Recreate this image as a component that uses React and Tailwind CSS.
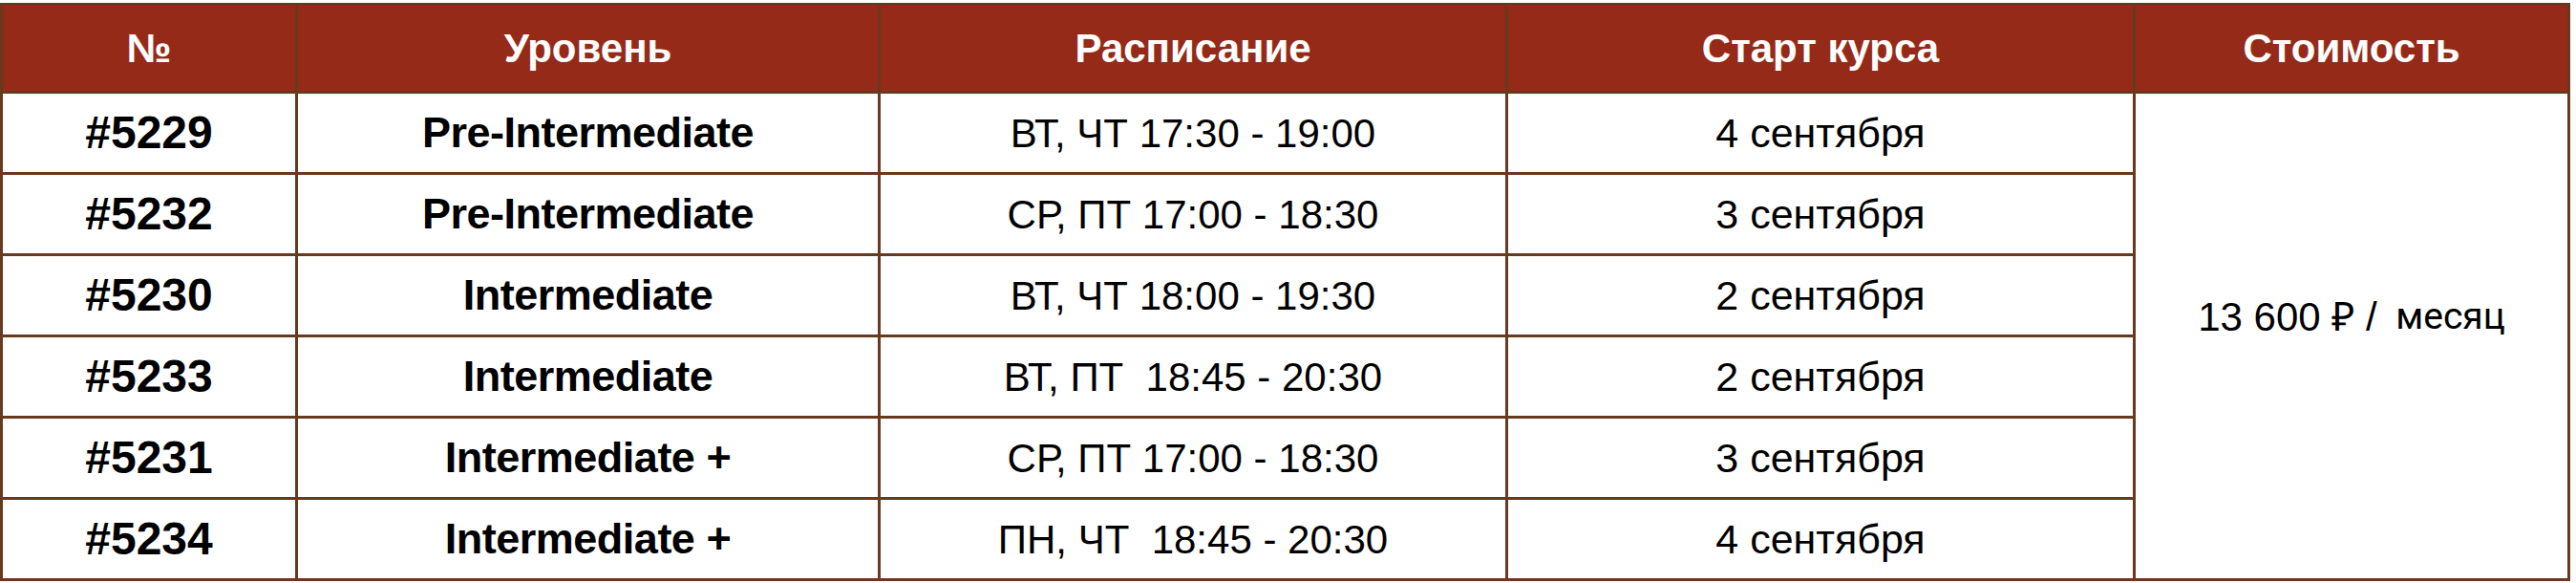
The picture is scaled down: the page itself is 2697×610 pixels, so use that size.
const rows = [
  { id: "#5229", level: "Pre-Intermediate", schedule: "ВТ, ЧТ 17:30 - 19:00", start: "4 сентября" },
  { id: "#5232", level: "Pre-Intermediate", schedule: "СР, ПТ 17:00 - 18:30", start: "3 сентября" },
  { id: "#5230", level: "Intermediate", schedule: "ВТ, ЧТ 18:00 - 19:30", start: "2 сентября" },
  { id: "#5233", level: "Intermediate", schedule: "ВТ, ПТ\u00a0 18:45 - 20:30", start: "2 сентября" },
  { id: "#5231", level: "Intermediate +", schedule: "СР, ПТ 17:00 - 18:30", start: "3 сентября" },
  { id: "#5234", level: "Intermediate +", schedule: "ПН, ЧТ\u00a0 18:45 - 20:30", start: "4 сентября" },
];

const headers = ["№", "Уровень", "Расписание", "Старт курса", "Стоимость"];

const App = () => {
  return (
    <div className="w-[2697px] h-[610px] bg-white pt-[3px] font-['Liberation_Sans',Arial,sans-serif]">
      <div className="grid w-[2691px] grid-cols-[306px_607px_654px_654px_452px] grid-rows-[89px_repeat(6,82px)] gap-[3px] bg-[#67391f] p-[3px]">
        {headers.map((h) => (
          <div
            key={h}
            className="flex items-center justify-center bg-[#962a19] text-[42px] font-bold text-white"
          >
            {h}
          </div>
        ))}

        {rows.map((row, i) => (
          <div key={row.id} className="contents">
            <div className="flex items-center justify-center bg-white text-[48px] font-bold text-black">
              {row.id}
            </div>
            <div className="flex items-center justify-center bg-white text-[45px] font-bold tracking-[-0.5px] text-black">
              {row.level}
            </div>
            <div className="flex items-center justify-center bg-white text-[42px] text-black">
              {row.schedule}
            </div>
            <div className="flex items-center justify-center bg-white text-[43px] text-black">
              {row.start}
            </div>
            {i === 0 && (
              <div className="row-span-6 flex items-center justify-center bg-white pb-[40px] text-[42px] text-black">
                <span>13 600 ₽ /&nbsp;</span>
                <span className="ml-[8px] font-['Roboto',sans-serif] text-[39px]">месяц</span>
              </div>
            )}
          </div>
        ))}
      </div>
    </div>
  );
};

export default App;
